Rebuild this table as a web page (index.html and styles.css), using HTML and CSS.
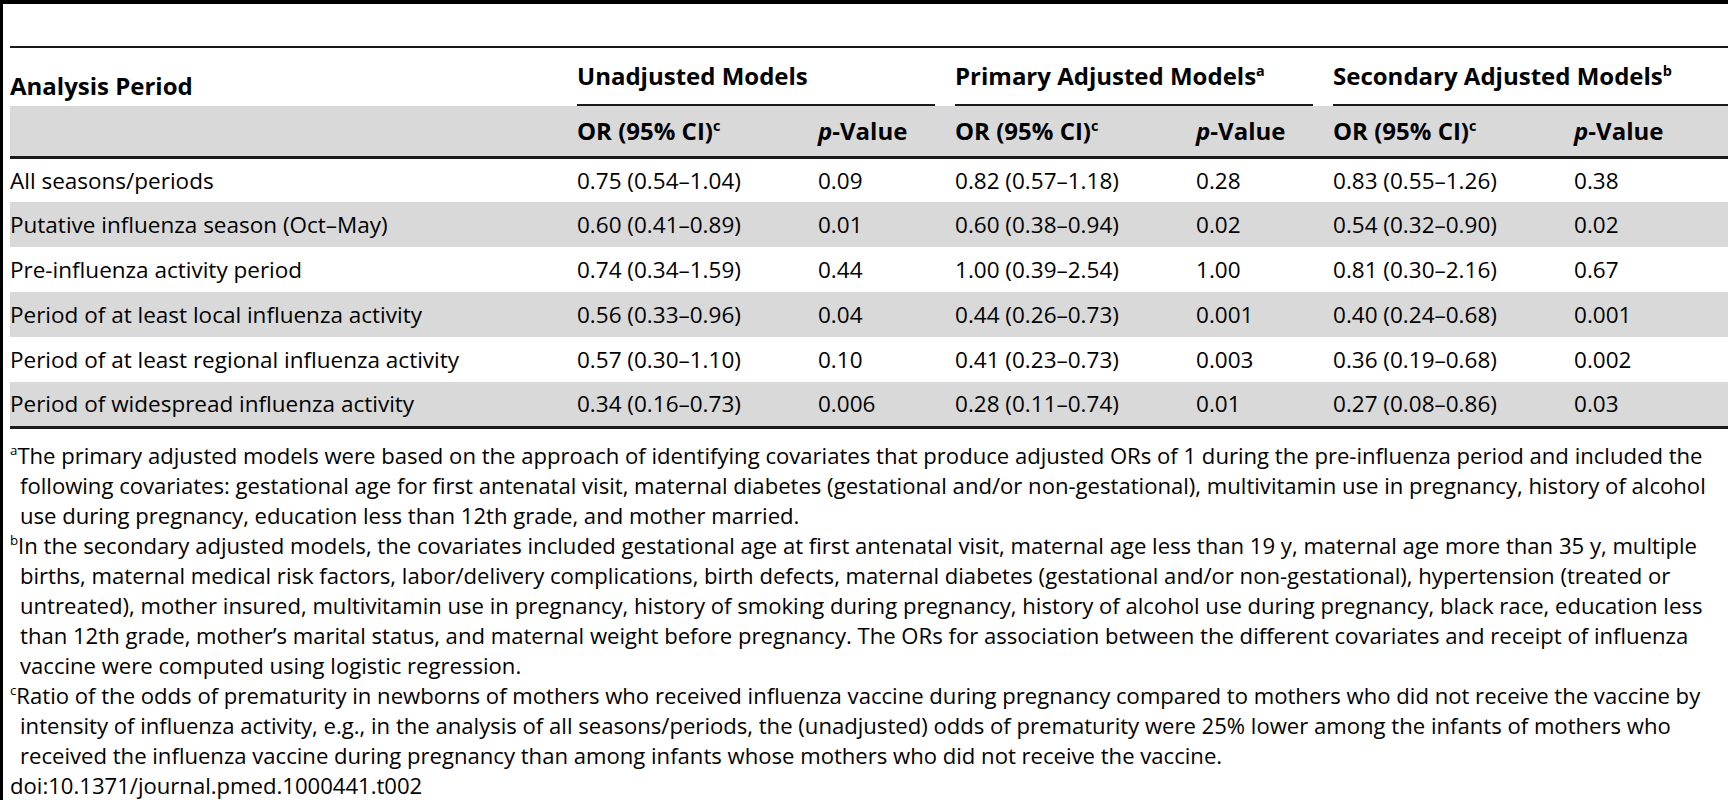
FILE: index.html
```html
<!DOCTYPE html>
<html lang="en">

<head>
    <meta charset="UTF-8">
    <meta name="viewport" content="width=device-width, initial-scale=1.0">
    <title>Table 2 - Influenza vaccine and prematurity</title>
    <link rel="stylesheet" href="styles.css">
</head>

<body>
    <div class="page">
        <!-- Main results table -->
        <table class="data">
            <colgroup>
                <col class="col-label">
                <col class="col-or">
                <col class="col-p">
                <col class="col-or">
                <col class="col-p">
                <col class="col-or">
                <col>
            </colgroup>
            <thead>
                <tr class="group-row">
                    <th class="label">Analysis Period</th>
                    <th colspan="2"><div class="group">Unadjusted Models</div></th>
                    <th colspan="2"><div class="group">Primary Adjusted Models<sup>a</sup></div></th>
                    <th colspan="2"><div class="group last">Secondary Adjusted Models<sup>b</sup></div></th>
                </tr>
                <tr class="sub-row">
                    <th></th>
                    <th>OR (95% CI)<sup>c</sup></th>
                    <th><i>p</i>-Value</th>
                    <th>OR (95% CI)<sup>c</sup></th>
                    <th><i>p</i>-Value</th>
                    <th>OR (95% CI)<sup>c</sup></th>
                    <th><i>p</i>-Value</th>
                </tr>
            </thead>
            <tbody>
                <tr>
                    <td>All seasons/periods</td>
                    <td>0.75 (0.54–1.04)</td>
                    <td>0.09</td>
                    <td>0.82 (0.57–1.18)</td>
                    <td>0.28</td>
                    <td>0.83 (0.55–1.26)</td>
                    <td>0.38</td>
                </tr>
                <tr>
                    <td>Putative influenza season (Oct–May)</td>
                    <td>0.60 (0.41–0.89)</td>
                    <td>0.01</td>
                    <td>0.60 (0.38–0.94)</td>
                    <td>0.02</td>
                    <td>0.54 (0.32–0.90)</td>
                    <td>0.02</td>
                </tr>
                <tr>
                    <td>Pre-influenza activity period</td>
                    <td>0.74 (0.34–1.59)</td>
                    <td>0.44</td>
                    <td>1.00 (0.39–2.54)</td>
                    <td>1.00</td>
                    <td>0.81 (0.30–2.16)</td>
                    <td>0.67</td>
                </tr>
                <tr>
                    <td>Period of at least local influenza activity</td>
                    <td>0.56 (0.33–0.96)</td>
                    <td>0.04</td>
                    <td>0.44 (0.26–0.73)</td>
                    <td>0.001</td>
                    <td>0.40 (0.24–0.68)</td>
                    <td>0.001</td>
                </tr>
                <tr>
                    <td>Period of at least regional influenza activity</td>
                    <td>0.57 (0.30–1.10)</td>
                    <td>0.10</td>
                    <td>0.41 (0.23–0.73)</td>
                    <td>0.003</td>
                    <td>0.36 (0.19–0.68)</td>
                    <td>0.002</td>
                </tr>
                <tr>
                    <td>Period of widespread influenza activity</td>
                    <td>0.34 (0.16–0.73)</td>
                    <td>0.006</td>
                    <td>0.28 (0.11–0.74)</td>
                    <td>0.01</td>
                    <td>0.27 (0.08–0.86)</td>
                    <td>0.03</td>
                </tr>
            </tbody>
        </table>

        <!-- Footnotes -->
        <div class="notes">
            <p><sup>a</sup>The primary adjusted models were based on the approach of identifying covariates that produce adjusted ORs of 1 during the pre-influenza period and included the following covariates: gestational age for first antenatal visit, maternal diabetes (gestational and/or non-gestational), multivitamin use in pregnancy, history of alcohol use during pregnancy, education less than 12th grade, and mother married.</p>
            <p><sup>b</sup>In the secondary adjusted models, the covariates included gestational age at first antenatal visit, maternal age less than 19 y, maternal age more than 35 y, multiple births, maternal medical risk factors, labor/delivery complications, birth defects, maternal diabetes (gestational and/or non-gestational), hypertension (treated or untreated), mother insured, multivitamin use in pregnancy, history of smoking during pregnancy, history of alcohol use during pregnancy, black race, education less than 12th grade, mother’s marital status, and maternal weight before pregnancy. The ORs for association between the different covariates and receipt of influenza vaccine were computed using logistic regression.</p>
            <p><sup>c</sup>Ratio of the odds of prematurity in newborns of mothers who received influenza vaccine during pregnancy compared to mothers who did not receive the vaccine by intensity of influenza activity, e.g., in the analysis of all seasons/periods, the (unadjusted) odds of prematurity were 25% lower among the infants of mothers who received the influenza vaccine during pregnancy than among infants whose mothers who did not receive the vaccine.</p>
        </div>
        <div class="doi">doi:10.1371/journal.pmed.1000441.t002</div>
    </div>
</body>

</html>
```

FILE: styles.css
```css
html,
body {
    margin: 0;
    background-color: #fff;
    overflow: hidden;
}

body {
    font-family: 'Open Sans', 'Liberation Sans', sans-serif;
    color: #000;
    font-size: 22.5px;
}

.page {
    border-top: 4px solid #000;
    border-left: 3px solid #000;
    padding: 42px 0 0 7px;
    height: 800px;
    box-sizing: border-box;
}

.data {
    width: 100%;
    border-collapse: collapse;
    table-layout: fixed;
    border-top: 2px solid #1a1a1a;
    border-bottom: 3px solid #1a1a1a;
}

.col-label {
    width: 567px;
}

.col-or {
    width: 241px;
}

.col-p {
    width: 137px;
}

th,
td {
    text-align: left;
    padding: 0;
    white-space: nowrap;
    box-sizing: border-box;
}

th {
    font-weight: bold;
    font-size: 24px;
}

sup {
    font-size: 0.6em;
    line-height: 0;
    vertical-align: 0.62em;
}

/* first header row: group titles with a rule below */
.group-row th {
    height: 59px;
    vertical-align: bottom;
}

.group-row th.label {
    padding-bottom: 4px;
}

.group {
    margin-right: 20px;
    padding-bottom: 12px;
    border-bottom: 2px solid #1a1a1a;
}

.group.last {
    margin-right: 0;
}

.sub-row th {
    height: 51px;
    background-color: #d9d9d9;
    border-bottom: 3px solid #1a1a1a;
}

tbody td {
    height: 45px;
    font-weight: normal;
}

tbody tr:nth-child(even) td {
    background-color: #d9d9d9;
}

/* footnotes: hanging indent so the letter sits in the margin */
.notes {
    margin-top: 11px;
    font-size: 22.1px;
}

.notes p {
    margin: 0;
    padding-left: 10px;
    text-indent: -10px;
    line-height: 30px;
}

.notes sup {
    font-size: 0.6em;
    vertical-align: 0.7em;
}

.doi {
    font-size: 22.1px;
    line-height: 30px;
}
```
